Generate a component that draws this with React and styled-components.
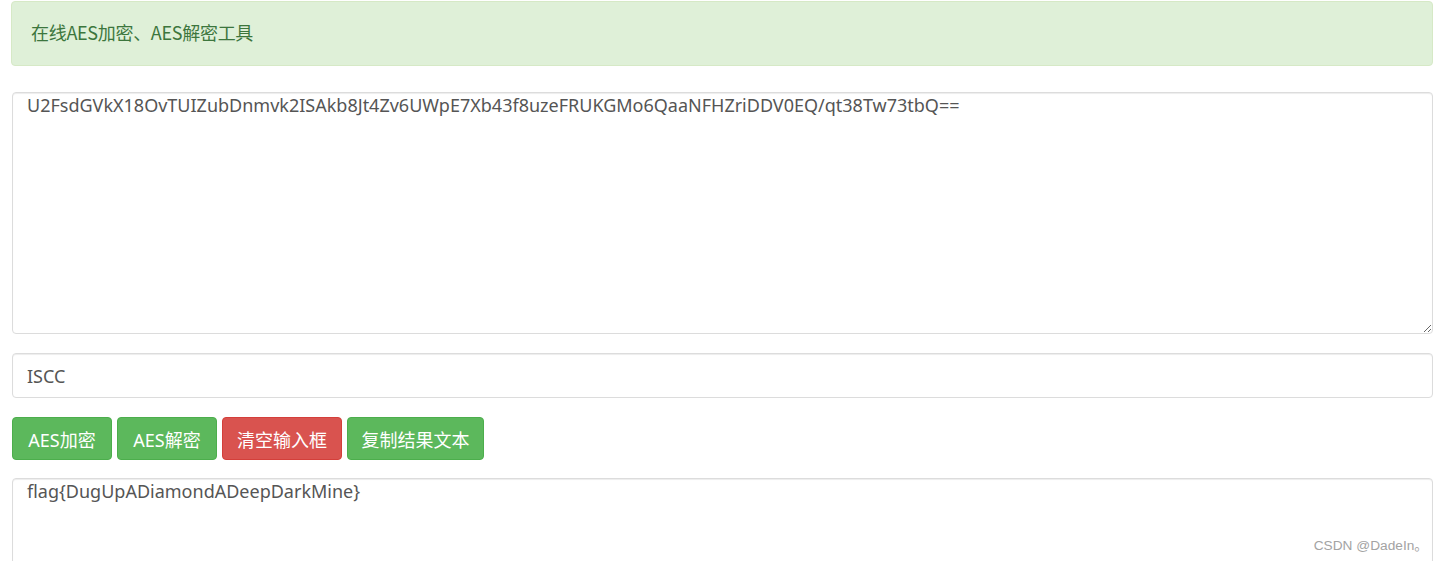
import styled, { createGlobalStyle } from "styled-components";

const GlobalStyle = createGlobalStyle`
  html, body {
    margin: 0;
    padding: 0;
    background: #fff;
  }
  body {
    font-family: "Noto Sans", "Noto Sans CJK SC", sans-serif;
    color: #555;
  }
`;

const StPage = styled.div`
  position: relative;
  width: 1434px;
  height: 561px;
  overflow: hidden;
  box-sizing: border-box;
  padding: 1px 1px 0 12px;
  display: flex;
  flex-direction: column;

  & > * {
    flex-shrink: 0;
  }
`;

const StAlert = styled.div`
  box-sizing: border-box;
  height: 65px;
  margin-left: -1px;
  padding: 0 19px 4px;
  display: flex;
  align-items: center;
  background-color: #dff0d8;
  border: 1px solid #d6e9c6;
  border-radius: 4px;
  color: #3c763d;
  font-size: 18px;
  font-family: "Noto Sans CJK SC", sans-serif;
  letter-spacing: -0.3px;
`;

const StTextarea = styled.textarea`
  display: block;
  box-sizing: border-box;
  width: 100%;
  height: ${(props) => props.$height}px;
  margin-top: ${(props) => props.$top}px;
  padding: 0 14px;
  border: 1px solid #dcdcdc;
  border-radius: 4px;
  box-shadow: inset 0 1px 1px rgba(0, 0, 0, 0.075);
  font-family: "Noto Sans", "Noto Sans CJK SC", sans-serif;
  font-size: 18px;
  line-height: 24px;
  color: #555;
  resize: ${(props) => (props.$resize ? "vertical" : "none")};
  outline: none;
`;

const StInput = styled.input`
  display: block;
  box-sizing: border-box;
  width: 100%;
  height: 45px;
  margin-top: 19px;
  padding: 0 14px;
  border: 1px solid #dcdcdc;
  border-radius: 4px;
  box-shadow: inset 0 1px 1px rgba(0, 0, 0, 0.075);
  font-family: "Noto Sans", sans-serif;
  font-size: 18px;
  color: #555;
  outline: none;
`;

const StButtonRow = styled.div`
  display: flex;
  gap: 5px;
  margin-top: 19px;
`;

const StButton = styled.button`
  box-sizing: border-box;
  height: 43px;
  width: ${(props) => props.$width}px;
  padding: 0;
  border: 1px solid ${(props) => (props.$danger ? "#d43f3a" : "#4cae4c")};
  border-radius: 4px;
  background-color: ${(props) => (props.$danger ? "#d9534f" : "#5cb85c")};
  color: #fff;
  font-family: "Noto Sans", "Noto Sans CJK SC", sans-serif;
  font-size: 18px;
  cursor: pointer;
`;

const StWatermark = styled.span`
  position: absolute;
  right: 6px;
  bottom: 7px;
  font-family: "Liberation Sans", "Noto Sans CJK SC", sans-serif;
  font-size: 13.7px;
  color: #a3a3a3;
`;

const App = () => {
  return (
    <>
      <GlobalStyle />
      <StPage>
        <StAlert>在线AES加密、AES解密工具</StAlert>
        <StTextarea
          $top={26}
          $height={242}
          $resize
          defaultValue="U2FsdGVkX18OvTUIZubDnmvk2ISAkb8Jt4Zv6UWpE7Xb43f8uzeFRUKGMo6QaaNFHZriDDV0EQ/qt38Tw73tbQ=="
        />
        <StInput defaultValue="ISCC" />
        <StButtonRow>
          <StButton $width={100}>AES加密</StButton>
          <StButton $width={100}>AES解密</StButton>
          <StButton $width={120} $danger>
            清空输入框
          </StButton>
          <StButton $width={137}>复制结果文本</StButton>
        </StButtonRow>
        <StTextarea $top={18} $height={120} defaultValue="flag{DugUpADiamondADeepDarkMine}" />
        <StWatermark>CSDN @DadeIn。</StWatermark>
      </StPage>
    </>
  );
};

export default App;
